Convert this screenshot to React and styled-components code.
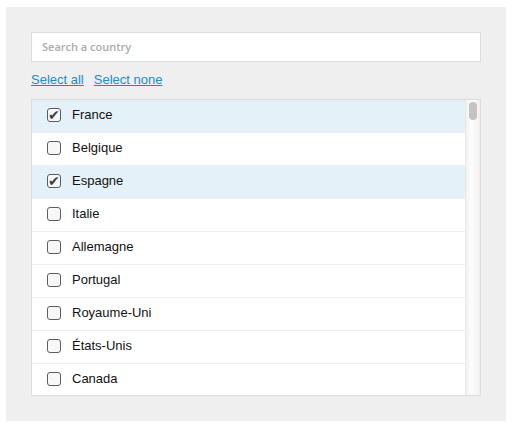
import { useState } from 'react';
import styled, { createGlobalStyle } from 'styled-components';

const COUNTRIES = [
  'France', 'Belgique', 'Espagne', 'Italie', 'Allemagne', 'Portugal', 'Royaume-Uni', 'États-Unis', 'Canada',
  'Mexique', 'Brésil', 'Argentine', 'Chili', 'Pérou', 'Colombie', 'Venezuela', 'Équateur', 'Bolivie',
  'Paraguay', 'Uruguay', 'Cuba', 'Haïti', 'Jamaïque', 'Panama', 'Costa Rica', 'Honduras', 'Guatemala',
  'Nicaragua', 'Salvador', 'Irlande', 'Islande', 'Norvège', 'Suède', 'Finlande', 'Danemark', 'Pays-Bas',
  'Luxembourg', 'Suisse', 'Autriche', 'Pologne', 'Tchéquie', 'Slovaquie', 'Hongrie', 'Roumanie', 'Bulgarie',
  'Grèce', 'Croatie', 'Slovénie', 'Serbie', 'Bosnie', 'Monténégro', 'Albanie', 'Macédoine', 'Malte',
  'Chypre', 'Turquie', 'Ukraine', 'Biélorussie', 'Lituanie', 'Lettonie', 'Estonie', 'Russie', 'Moldavie',
  'Géorgie', 'Arménie', 'Azerbaïdjan', 'Kazakhstan', 'Ouzbékistan', 'Mongolie', 'Chine', 'Japon', 'Corée du Sud',
  'Inde', 'Pakistan', 'Bangladesh', 'Népal', 'Sri Lanka', 'Thaïlande', 'Vietnam', 'Cambodge', 'Laos',
  'Malaisie', 'Singapour', 'Indonésie', 'Philippines', 'Australie', 'Nouvelle-Zélande', 'Fidji', 'Iran', 'Irak',
  'Syrie', 'Liban', 'Israël', 'Jordanie', 'Arabie saoudite', 'Koweït', 'Qatar', 'Oman', 'Yémen',
  'Égypte', 'Libye', 'Tunisie', 'Algérie', 'Maroc', 'Mauritanie', 'Sénégal', 'Mali', 'Niger',
  'Tchad', 'Soudan', 'Éthiopie', 'Somalie', 'Kenya', 'Ouganda', 'Tanzanie', 'Rwanda', 'Burundi',
  'Congo', 'Gabon', 'Cameroun', 'Nigeria', 'Bénin', 'Togo', 'Ghana', 'Côte d\'Ivoire', 'Guinée',
  'Liberia', 'Sierra Leone', 'Gambie', 'Angola', 'Zambie', 'Zimbabwe', 'Mozambique', 'Madagascar', 'Maurice',
  'Botswana', 'Namibie', 'Afrique du Sud', 'Lesotho', 'Eswatini', 'Malawi', 'Érythrée', 'Djibouti', 'Comores',
];

const ROW_H = 33;
const VIEW_H = 295;
const TRACK_H = 291;

function App() {
  const [query, setQuery] = useState('');
  const [selected, setSelected] = useState(['France', 'Espagne']);
  const [scrollTop, setScrollTop] = useState(0);

  function toggle(name) {
    setSelected(selected.includes(name) ? selected.filter(n => n !== name) : [...selected, name]);
  }

  const visible = COUNTRIES.filter(c => c.toLowerCase().includes(query.toLowerCase()));
  const contentH = Math.max(visible.length * ROW_H, VIEW_H);
  const thumbH = Math.max(18, Math.round((VIEW_H / contentH) * TRACK_H));
  const maxScroll = contentH - VIEW_H;
  const thumbTop = maxScroll > 0 ? (scrollTop / maxScroll) * (TRACK_H - thumbH) : 0;

  return (
    <>
      <GlobalStyle />
      <Panel>
        <SearchInput
          placeholder="Search a country"
          value={query}
          onChange={e => setQuery(e.target.value)}
        />
        <Links>
          <LinkButton onClick={() => setSelected([...COUNTRIES])}>Select all</LinkButton>
          <LinkButton onClick={() => setSelected([])}>Select none</LinkButton>
        </Links>
        <List>
          <Viewport onScroll={e => setScrollTop(e.currentTarget.scrollTop)}>
            {visible.map(name => {
              const checked = selected.includes(name);
              return (
                <Row key={name} checked={checked} onClick={() => toggle(name)}>
                  <Box>{checked && <Tick>✔</Tick>}</Box>
                  <Label>{name}</Label>
                </Row>
              );
            })}
          </Viewport>
          <Track>
            <Thumb style={{ height: thumbH, marginTop: thumbTop }} />
          </Track>
        </List>
      </Panel>
    </>
  );
}

const GlobalStyle = createGlobalStyle`
  body {
    margin: 0;
    background: #fff;
    font-family: "Liberation Sans", Arial, sans-serif;
  }
`;

const Panel = styled.div`
  display: flex;
  flex-direction: column;
  box-sizing: border-box;
  width: 500px;
  height: 414px;
  margin: 7px 0 0 6px;
  padding: 25px;
  background: #efefef;
`;

const SearchInput = styled.input`
  box-sizing: border-box;
  width: 450px;
  height: 30px;
  padding: 0 10px 1px;
  border: 1px solid #dcdcdc;
  background: #fff;
  outline: none;
  font-family: "Open Sans", sans-serif;
  font-size: 11px;
  font-weight: 600;
  color: #333;
  &::placeholder {
    color: #acacac;
  }
`;

const Links = styled.div`
  display: flex;
  gap: 10px;
  margin: 7px 0 8px;
`;

const LinkButton = styled.a`
  font-size: 13px;
  line-height: 22px;
  color: #1d8bc6;
  text-decoration: underline;
  cursor: pointer;
`;

const List = styled.div`
  display: flex;
  box-sizing: border-box;
  width: 450px;
  height: 297px;
  border: 1px solid #dcdcdc;
  background: #fff;
`;

const Viewport = styled.div`
  flex: 1;
  overflow-y: auto;
  scrollbar-width: none;
  &::-webkit-scrollbar {
    display: none;
  }
`;

const Track = styled.div`
  box-sizing: border-box;
  width: 15px;
  flex-shrink: 0;
  padding: 2px 3px 2px 3px;
  border-left: 1px solid #e8e8e8;
  background: linear-gradient(to right, #f1f1f1, #fcfcfc 35%, #f7f7f7 75%, #eeeeee);
`;

const Thumb = styled.div`
  width: 8px;
  border-radius: 4px;
  background: #c3c3c3;
`;

const Row = styled.div`
  display: flex;
  align-items: center;
  box-sizing: border-box;
  height: 33px;
  padding: 0 0 3px 15px;
  border-bottom: 1px solid #eeeeee;
  background: ${props => (props.checked ? '#e5f1f8' : '#fff')};
  cursor: pointer;
`;

const Box = styled.span`
  box-sizing: border-box;
  position: relative;
  width: 14px;
  height: 14px;
  border: 1px solid #595c61;
  border-radius: 3px;
  background: #f7f7f7;
  flex-shrink: 0;
`;

const Tick = styled.span`
  position: absolute;
  left: 0;
  top: -2px;
  font-family: "DejaVu Sans", sans-serif;
  font-size: 14px;
  line-height: 16px;
  color: #3b414c;
`;

const Label = styled.span`
  margin-left: 11px;
  font-size: 13px;
  color: #111;
`;

export default App;
